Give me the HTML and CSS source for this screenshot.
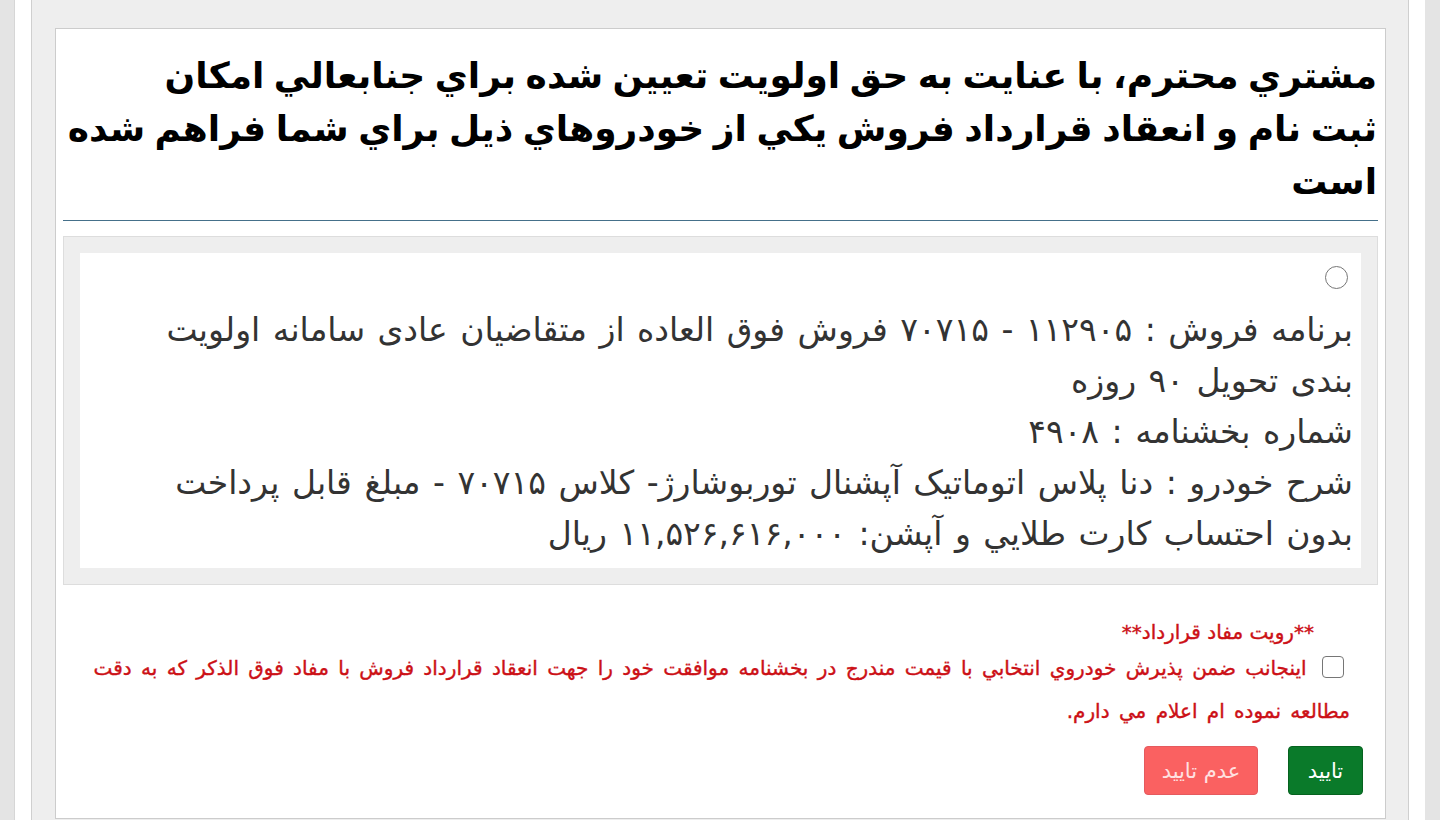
FILE: index.html
```html
<!DOCTYPE html>
<html lang="fa" dir="rtl">
<head>
<meta charset="utf-8">
<title>انتخاب خودرو</title>
<link rel="stylesheet" href="styles.css">
</head>
<body>
<div class="frame">
  <div class="inner">
    <div class="card">
      <h2 class="title">مشتري محترم، با عنايت به حق اولويت تعيين شده براي جنابعالي امكان<br>ثبت نام و انعقاد قرارداد فروش يكي از خودروهاي ذيل براي شما فراهم شده<br>است</h2>
      <div class="options">
        <div class="option">
          <div class="radio-row"><input class="radio" type="radio" name="car"></div>
          <div class="option-text">
            <div>برنامه فروش : ۱۱۲۹۰۵ - ۷۰۷۱۵ فروش فوق العاده از متقاضیان عادی سامانه اولویت<br>بندی تحویل ۹۰ روزه</div>
            <div>شماره بخشنامه : ۴۹۰۸</div>
            <div>شرح خودرو : دنا پلاس اتوماتیک آپشنال توربوشارژ- کلاس ۷۰۷۱۵ - مبلغ قابل پرداخت<br>بدون احتساب کارت طلايي و آپشن: ۱۱,۵۲۶,۶۱۶,۰۰۰ ريال</div>
          </div>
        </div>
      </div>
      <div class="terms">
        <div class="terms-title">**رویت مفاد قرارداد**</div>
        <label class="terms-text"><input class="check" type="checkbox"> اینجانب ضمن پذيرش خودروي انتخابي با قيمت مندرج در بخشنامه موافقت خود را جهت انعقاد قرارداد فروش با مفاد فوق الذكر كه به دقت مطالعه نموده ام اعلام مي دارم.</label>
      </div>
      <div class="actions">
        <button class="btn btn-ok" type="button">تایید</button>
        <button class="btn btn-no" type="button">عدم تایید</button>
      </div>
    </div>
  </div>
</div>
</body>
</html>
```
FILE: styles.css
```css
html, body {
  margin: 0;
  padding: 0;
}
body {
  background: #e4e4e4;
  padding: 0 15px 0 14px;
  font-family: "DejaVu Sans", "Noto Sans", sans-serif;
  color: #333;
}
.frame {
  background: #fff;
  border-left: 1px solid #d6d6d6;
  padding: 0 16px;
  min-height: 820px;
}
.inner {
  background: #eee;
  border-left: 1px solid #cfcfcf;
  border-right: 1px solid #cfcfcf;
  padding: 28px 22px 20px 23px;
  min-height: 820px;
  box-sizing: border-box;
}
.card {
  background: #fff;
  border: 1px solid #ccc;
  padding: 0 7px 23px;
}
.title {
  margin: 0;
  padding: 20px 1px 12px;
  font-size: 36px;
  line-height: 53px;
  font-weight: bold;
  word-spacing: -3px;
  color: #000;
  border-bottom: 1px solid #45708a;
}
.options {
  margin-top: 15px;
  background: #eee;
  border: 1px solid #ddd;
  padding: 16px;
}
.option {
  background: #fff;
  padding: 13px 8px 9px 13px;
}
.radio-row {
  height: 23px;
  margin-bottom: 15px;
  display: flex;
}
.radio {
  appearance: none;
  -webkit-appearance: none;
  width: 23px;
  height: 23px;
  margin: 0 5px 0 0;
  border: 1.5px solid #767676;
  border-radius: 50%;
  box-sizing: border-box;
  background: #fff;
}
.option-text {
  font-size: 33px;
  line-height: 51px;
  word-spacing: 2px;
  color: #333;
}
.terms {
  margin-top: 32px;
  padding-right: 28px;
  color: #cc1016;
  -webkit-text-stroke: 0.4px #cc1016;
}
.terms-title {
  font-size: 20px;
  line-height: 30px;
  padding-right: 36px;
}
.terms-text {
  display: block;
  font-size: 20px;
  line-height: 43px;
  word-spacing: 3px;
}
.check {
  appearance: none;
  -webkit-appearance: none;
  width: 22px;
  height: 22px;
  margin: 0 6px 0 6px;
  border: 1.5px solid #767676;
  border-radius: 4px;
  box-sizing: border-box;
  vertical-align: -3px;
  background: #fff;
}
.actions {
  margin-top: 13px;
  margin-right: 15px;
  display: flex;
  gap: 30px;
}
.btn {
  height: 49px;
  padding: 0 16px;
  border-radius: 4px;
  font-family: "DejaVu Sans", sans-serif;
  font-size: 21px;
  cursor: pointer;
}
.btn-ok {
  background: #0a7a2a;
  border: 1px solid #06621f;
  color: #fff;
  min-width: 75px;
}
.btn-no {
  background: #fa6161;
  border: 1px solid #e55a5e;
  color: #ffe1e1;
  min-width: 114px;
}
```
